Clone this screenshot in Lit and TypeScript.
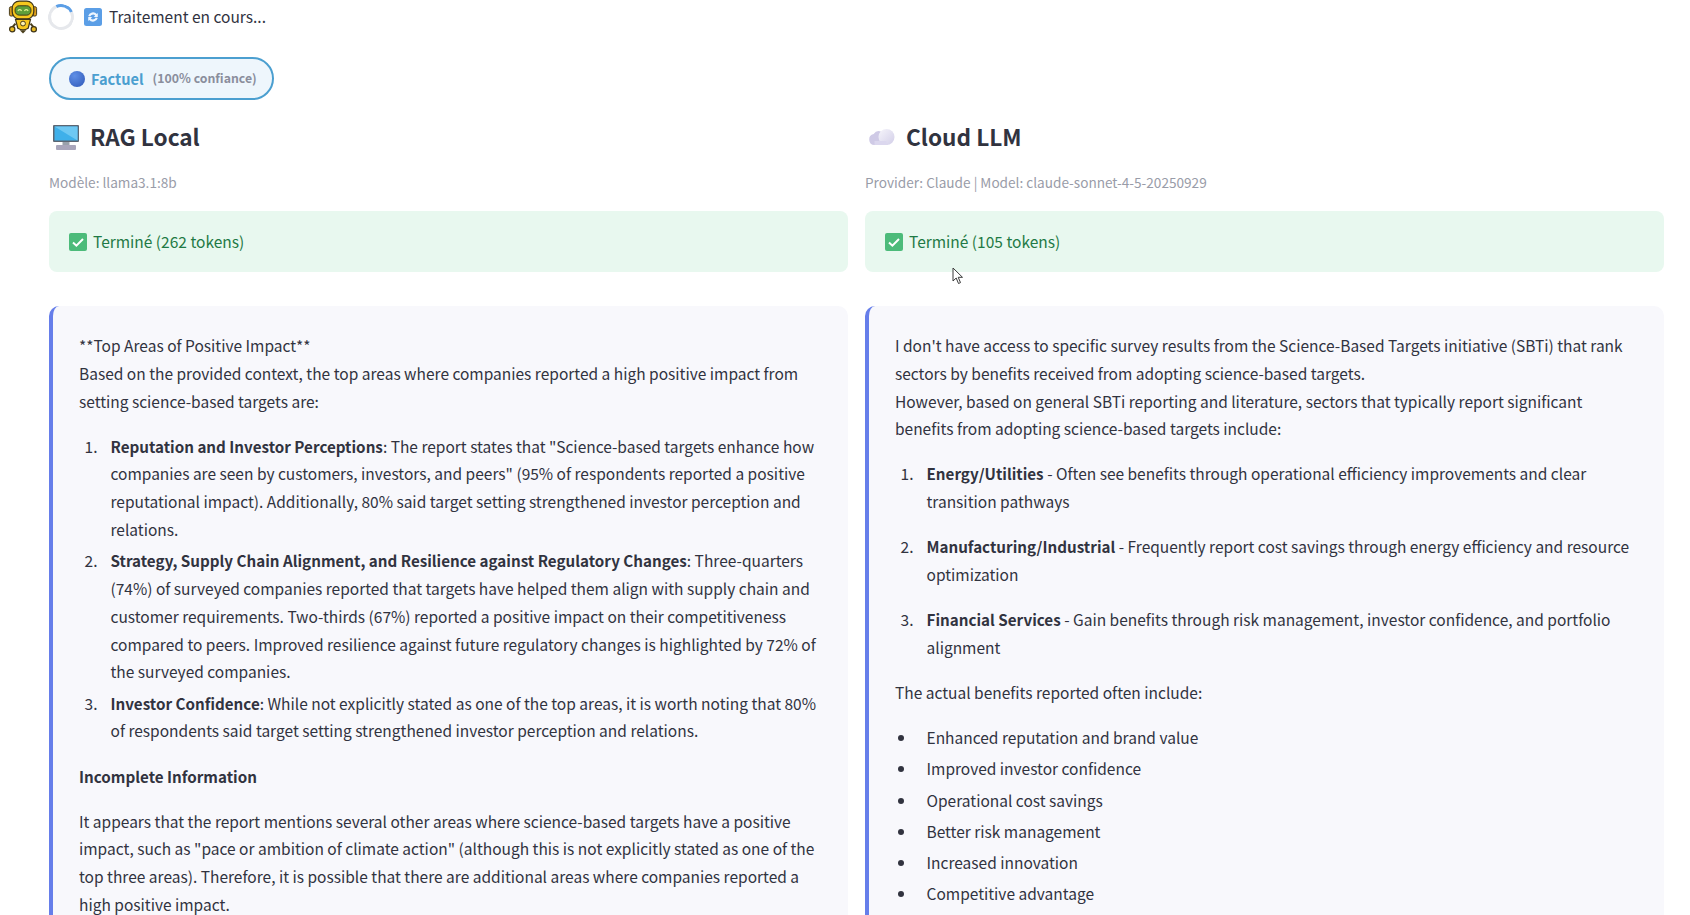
import { LitElement, css, html, svg } from "lit";
import { customElement } from "lit/decorators.js";

const robot = svg`<svg class="robot" viewBox="0 0 32 36" width="30" height="36">
  <path d="M8 25l-3.500 4M24 25l3.500 4" stroke="#4a3f1c" stroke-width="2.200"/>
  <circle cx="4.500" cy="31" r="2.800" fill="#e8b923" stroke="#3f3518" stroke-width="1.300"/>
  <circle cx="27.500" cy="31" r="2.800" fill="#e8b923" stroke="#3f3518" stroke-width="1.300"/>
  <rect x="1.500" y="7" width="4.500" height="10" rx="1.800" fill="#d99b1c" stroke="#3f3518"/>
  <rect x="26" y="7" width="4.500" height="10" rx="1.800" fill="#d99b1c" stroke="#3f3518"/>
  <rect x="4.500" y="1" width="23" height="19" rx="7.500" fill="#f7c81e" stroke="#3f3518" stroke-width="1.300"/>
  <rect x="7.500" y="6" width="17" height="10" rx="4.500" fill="#5f9e3a" stroke="#3f3518"/>
  <path d="M10.500 11.500q2-2.600 4 0M17.500 11.500q2-2.600 4 0" fill="none" stroke="#dff28f" stroke-width="1.300"/>
  <path d="M8 20.500h16l-2.500 9.500q-5.500 3.500-11 0z" fill="#f7c81e" stroke="#3f3518" stroke-width="1.300"/>
  <circle cx="16" cy="25" r="2.600" fill="#fff3b0" stroke="#3f3518"/>
  <path d="M12.500 32h7l-3.500 3.500z" fill="#4a3f1c"/>
</svg>`;

const sync = svg`<svg viewBox="0 0 18 18" width="18" height="18">
  <rect width="18" height="18" rx="2.500" fill="#5b9ee6"/>
  <path d="M4.200 8a5 5 0 0 1 8.600-2l1-1v4h-4l1.400-1.400a3 3 0 0 0-5 .8zM13.800 10a5 5 0 0 1-8.600 2l-1 1V9h4L6.800 10.400a3 3 0 0 0 5-.8z" fill="#eef6ff"/>
</svg>`;

const monitor = svg`<svg viewBox="0 0 28 28" width="28" height="28">
  <rect x="1" y="2" width="26" height="17" rx="1" fill="#5c6672"/>
  <rect x="2.500" y="3.500" width="23" height="14" fill="#3fb0ea"/>
  <path d="M2.500 3.500h23v14z" fill="#6ec8f3"/>
  <rect x="10.500" y="19" width="7" height="3" fill="#9aa1ab"/>
  <rect x="4" y="22" width="20" height="5" rx="1" fill="#a9a6bb"/>
</svg>`;

const cloud = svg`<svg viewBox="0 0 28 20" width="28" height="20">
  <defs><linearGradient id="cl" x1="0" x2="1" y1="0" y2="1"><stop offset="0" stop-color="#f6f5fb"/><stop offset="1" stop-color="#d2cee8"/></linearGradient></defs>
  <path d="M6.500 18a5.500 5.500 0 0 1-.8-10.900A6 6 0 0 1 13 4.500L20 18z" fill="#cfcae6"/>
  <circle cx="18.500" cy="10" r="8" fill="url(#cl)"/>
  <path d="M6.500 18h12v-4h-12z" fill="#dbd7ee"/>
</svg>`;

const check = svg`<svg viewBox="0 0 18 18" width="18" height="18">
  <rect width="18" height="18" rx="2" fill="#4cbb7a"/>
  <path d="M4 9.500l3.400 3.200L14 6" fill="none" stroke="#fff" stroke-width="2"/>
</svg>`;

const cursor = svg`<svg class="cursor" viewBox="0 0 12 18" width="12" height="18">
  <path d="M1 1v13l3.200-3 2.300 5.500 2-.9-2.300-5.300H10.500z" fill="#fff" stroke="#3a3a3a" stroke-width="1"/>
</svg>`;

@customElement("app-root")
export class AppRoot extends LitElement {
  render() {
    return html`
      <div class="status">
        ${robot}
        <span class="spinner"></span>
        ${sync}
        <span class="label">Traitement en cours...</span>
      </div>
      <div class="badge">
        <span class="dot"></span>
        <span class="kind">Factuel</span>
        <span class="conf">(100% confiance)</span>
      </div>
      <div class="cols">
        <section>
          <h3>${monitor}<span>RAG Local</span></h3>
          <p class="model">Modèle: llama3.1:8b</p>
          <div class="done">${check}<span>Terminé (262 tokens)</span></div>
          <div class="answer">
            <p>**Top Areas of Positive Impact**<br />Based on the provided context, the top areas where companies reported a high positive impact from setting science-based targets are:</p>
            <ol>
              <li><b>Reputation and Investor Perceptions</b>: The report states that "Science-based targets enhance how companies are seen by customers, investors, and peers" (95% of respondents reported a positive reputational impact). Additionally, 80% said target setting strengthened investor perception and relations.</li>
              <li><b>Strategy, Supply Chain Alignment, and Resilience against Regulatory Changes</b>: Three-quarters (74%) of surveyed companies reported that targets have helped them align with supply chain and customer requirements. Two-thirds (67%) reported a positive impact on their competitiveness compared to peers. Improved resilience against future regulatory changes is highlighted by 72% of the surveyed companies.</li>
              <li><b>Investor Confidence</b>: While not explicitly stated as one of the top areas, it is worth noting that 80% of respondents said target setting strengthened investor perception and relations.</li>
            </ol>
            <p><b>Incomplete Information</b></p>
            <p>It appears that the report mentions several other areas where science-based targets have a positive impact, such as "pace or ambition of climate action" (although this is not explicitly stated as one of the top three areas). Therefore, it is possible that there are additional areas where companies reported a high positive impact.</p>
          </div>
        </section>
        <section>
          <h3>${cloud}<span>Cloud LLM</span></h3>
          <p class="model">Provider: Claude | Model: claude-sonnet-4-5-20250929</p>
          <div class="done">${check}<span>Terminé (105 tokens)</span>${cursor}</div>
          <div class="answer">
            <p>I don't have access to specific survey results from the Science-Based Targets initiative (SBTi) that rank sectors by benefits received from adopting science-based targets.<br />However, based on general SBTi reporting and literature, sectors that typically report significant benefits from adopting science-based targets include:</p>
            <ol class="spaced">
              <li><p><b>Energy/Utilities</b> - Often see benefits through operational efficiency improvements and clear transition pathways</p></li>
              <li><p><b>Manufacturing/Industrial</b> - Frequently report cost savings through energy efficiency and resource optimization</p></li>
              <li><p><b>Financial Services</b> - Gain benefits through risk management, investor confidence, and portfolio alignment</p></li>
            </ol>
            <p>The actual benefits reported often include:</p>
            <ul>
              <li>Enhanced reputation and brand value</li>
              <li>Improved investor confidence</li>
              <li>Operational cost savings</li>
              <li>Better risk management</li>
              <li>Increased innovation</li>
              <li>Competitive advantage</li>
            </ul>
          </div>
        </section>
      </div>
    `;
  }

  static styles = css`
    :host {
      display: block;
      height: 915px;
      overflow: hidden;
      background: #fff;
      color: #31333f;
      font-family: "Noto Sans CJK SC", "Source Sans Pro", sans-serif;
      font-size: 15.5px;
      line-height: 27.8px;
    }

    .status {
      display: flex;
      align-items: center;
      height: 34px;
      padding-left: 8px;
      gap: 10px;
    }

    .label {
      margin-left: -3px;
    }

    .spinner {
      width: 20px;
      height: 20px;
      border: 3px solid #e6e8ec;
      border-top-color: #5b9ee6;
      border-radius: 50%;
      transform: rotate(20deg);
    }

    .badge {
      display: inline-flex;
      align-items: center;
      box-sizing: border-box;
      width: 225px;
      height: 43px;
      margin: 23px 0 0 49px;
      padding-left: 18px;
      background: #eef6fc;
      border: 2px solid #4b9fd0;
      border-radius: 22px;
      white-space: nowrap;
    }

    .dot {
      width: 16px;
      height: 16px;
      border-radius: 50%;
      background: radial-gradient(circle at 35% 30%, #5f8fe6, #2f58b8);
      margin-right: 6px;
    }

    .kind {
      color: #4b9fd0;
      font-size: 14.600px;
      font-weight: 600;
    }

    .conf {
      color: #8a8e9c;
      font-size: 12.300px;
      font-weight: 600;
      margin-left: 9px;
    }

    .cols {
      display: grid;
      grid-template-columns: 799px 799px;
      gap: 17px;
      padding: 0 26px 0 49px;
    }

    section {
      min-width: 0;
      position: relative;
    }

    h3 {
      display: flex;
      align-items: center;
      gap: 10px;
      height: 44px;
      margin: 15px 0 0 3px;
      font-size: 22.600px;
      font-weight: 600;
      line-height: 44px;
    }

    .model {
      margin: 11px 0 0;
      color: #999ca8;
      font-size: 13.600px;
      line-height: 24px;
    }

    .done {
      display: flex;
      align-items: center;
      gap: 6px;
      height: 61px;
      margin-top: 17px;
      padding-left: 20px;
      box-sizing: border-box;
      background: #e8f8ef;
      border-radius: 8px;
      color: #1f7a45;
    }

    .cursor {
      position: absolute;
      left: 87px;
      top: 167px;
    }

    .answer {
      box-sizing: border-box;
      margin-top: 34px;
      padding: 26px;
      background: #f8f8fc;
      border-left: 4px solid #667eea;
      border-radius: 10px;
    }

    p {
      margin: 0 0 17.300px;
    }

    ol,
    ul {
      margin: 0 0 17.300px;
      padding-left: 22px;
    }

    li {
      padding-left: 9.500px;
      margin-bottom: 3.400px;
    }

    li p {
      margin: 0;
    }

    .spaced li {
      margin-bottom: 17.300px;
    }

    b {
      font-size: 15.200px;
      font-weight: 600;
    }
  `;
}

declare global {
  interface HTMLElementTagNameMap {
    "app-root": AppRoot;
  }
}
